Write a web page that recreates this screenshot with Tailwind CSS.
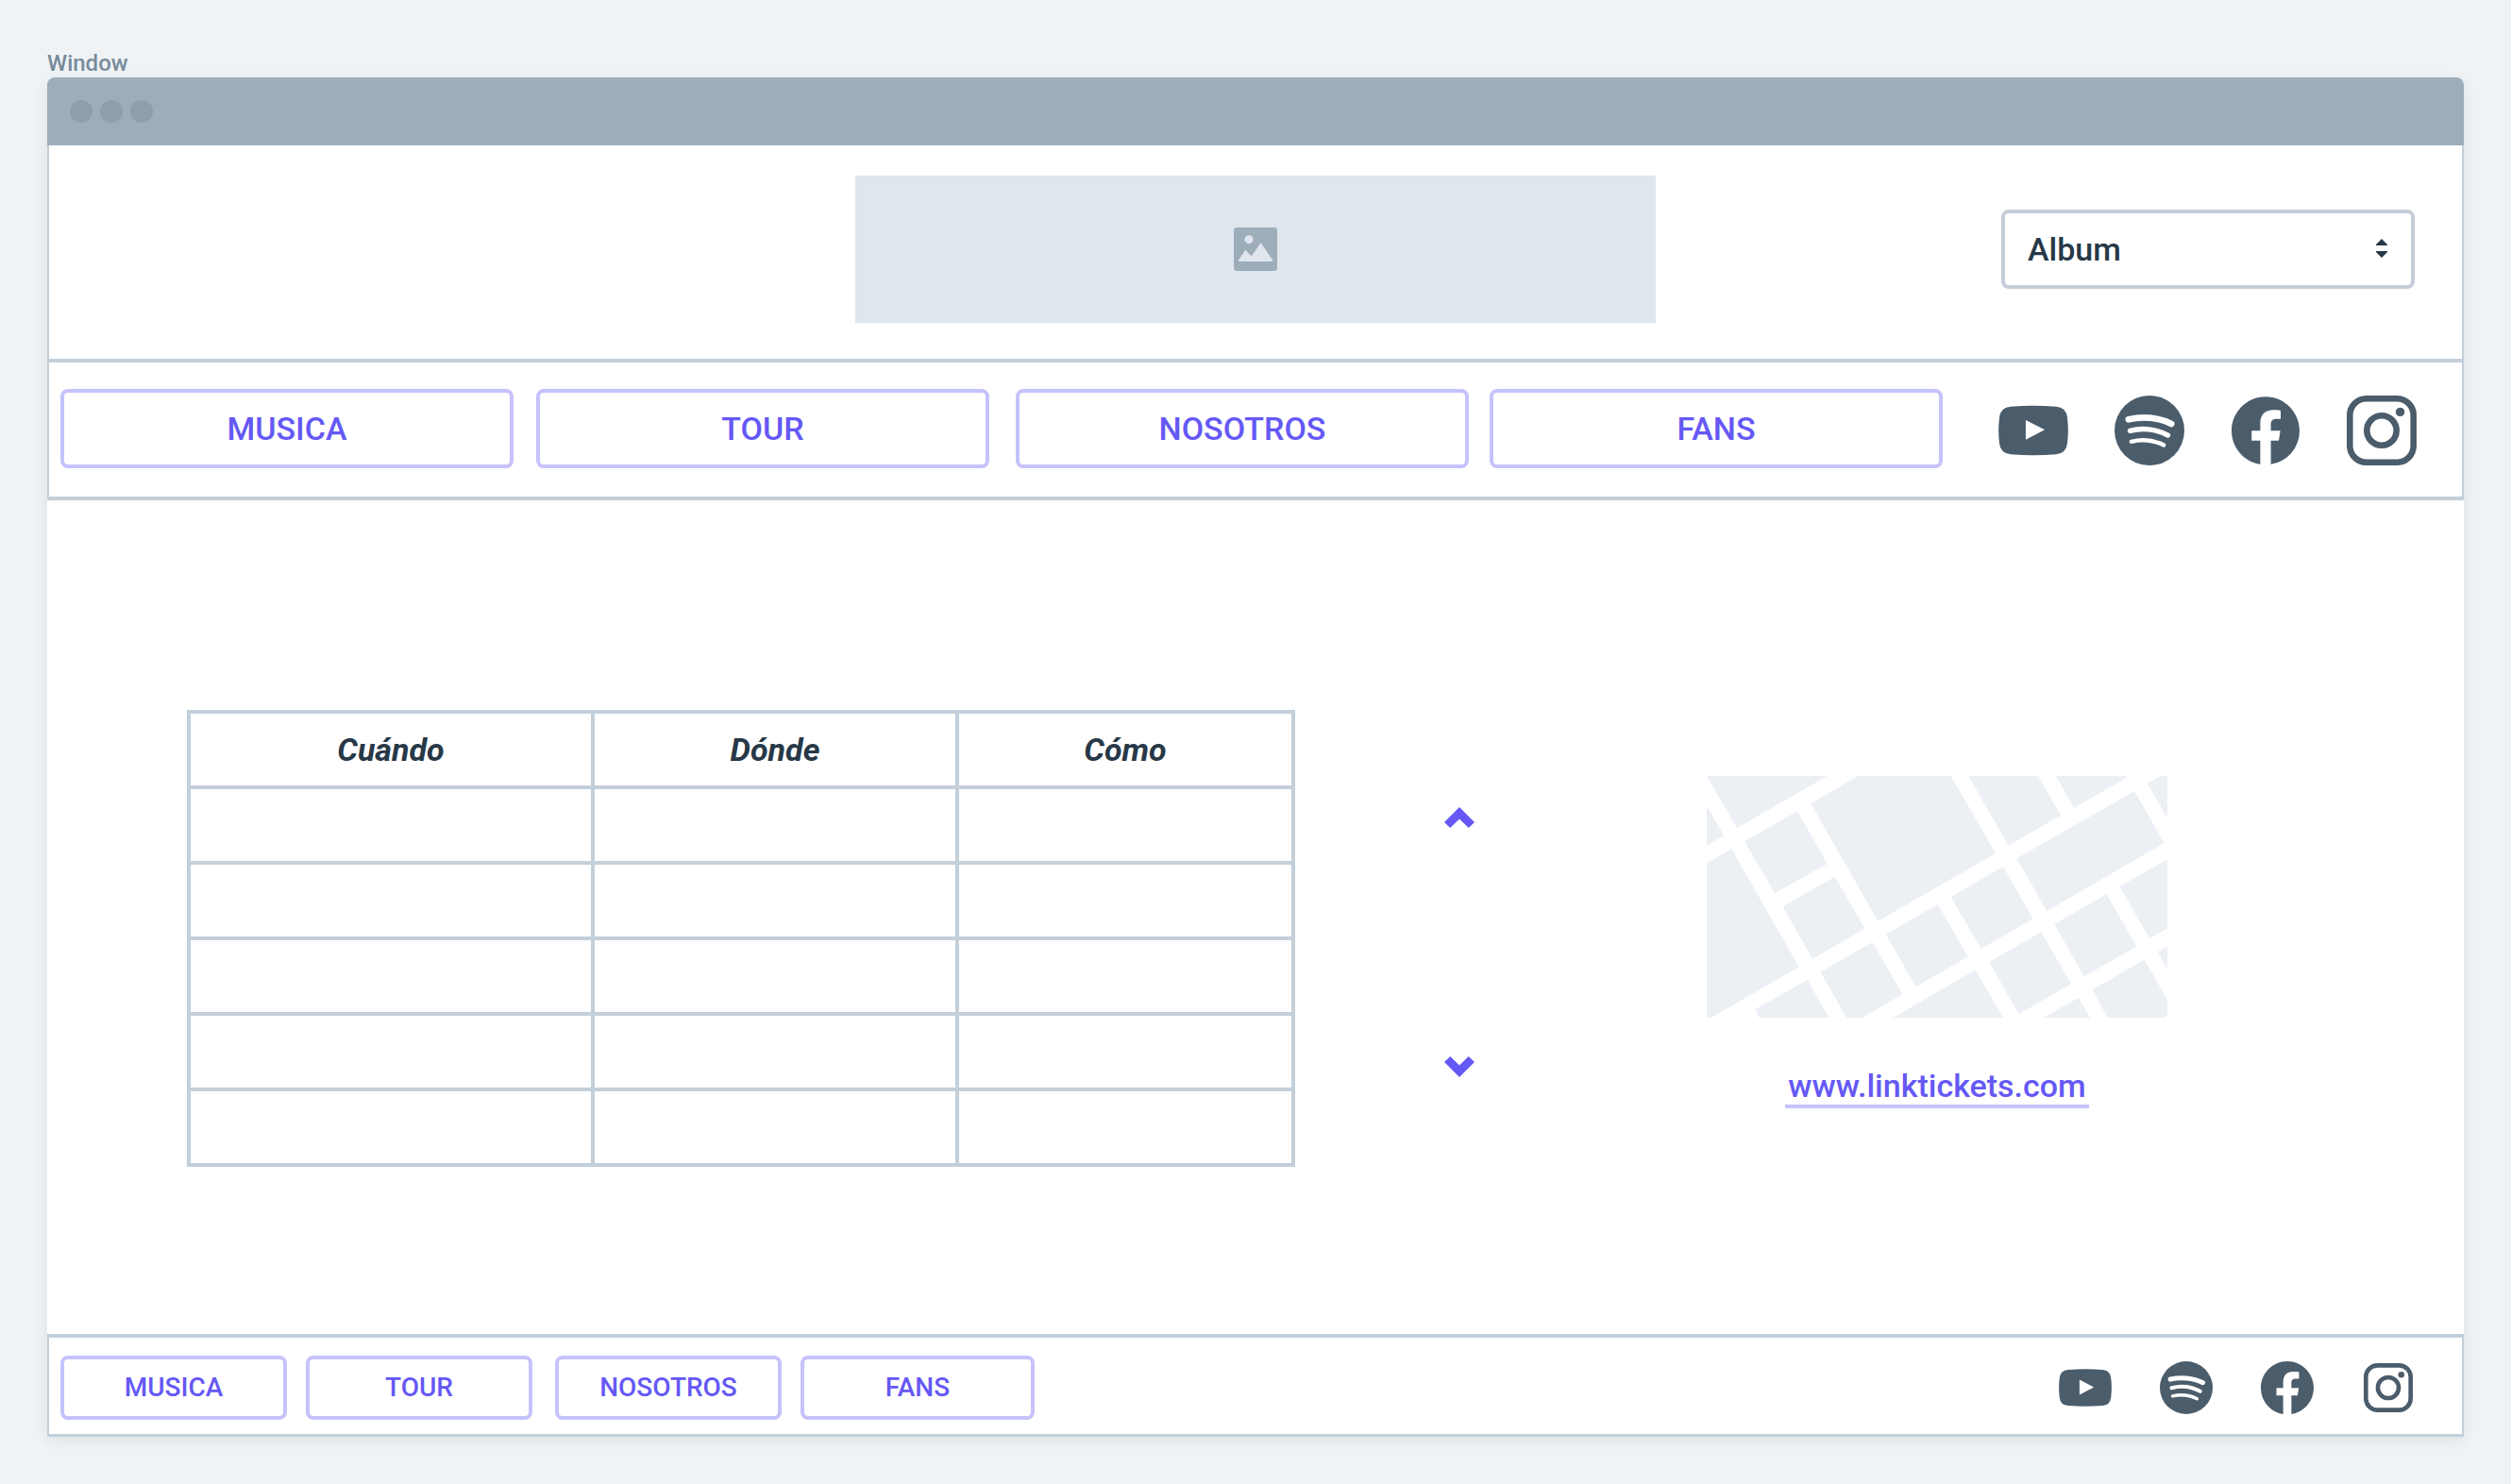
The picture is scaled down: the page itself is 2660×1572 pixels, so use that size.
<!DOCTYPE html>
<html lang="es">
<head>
<meta charset="utf-8">
<meta name="viewport" content="width=device-width, initial-scale=1">
<title>Tour</title>
<script src="https://cdn.jsdelivr.net/npm/@tailwindcss/browser@4"></script>
</head>
<body class="min-h-screen bg-[#eff3f6] px-[50px] pt-[52px] pb-[50px] font-[Roboto,sans-serif] font-medium text-[#273847]">

<!-- Icon shapes shared by the top and bottom bars -->
<svg class="hidden" aria-hidden="true">
  <symbol id="youtube" viewBox="26 28 220 220">
    <path fill="currentColor" fill-rule="evenodd" d="M65 63Q136 57 207 63Q240 65 243 98Q248 138 243 178Q240 210 207 213Q136 219 65 213Q32 210 29 178Q24 138 29 98Q32 65 65 63ZM112 105V167L172 136Z"/>
  </symbol>
  <symbol id="spotify" viewBox="394 28 220 220">
    <circle cx="504" cy="138" r="110" fill="currentColor"/>
    <g fill="none" stroke="#fff" stroke-linecap="round">
      <path stroke-width="20" d="M438 103C480 93 533 96 573 117"/>
      <path stroke-width="16" d="M443 139C480 129 525 133 562 153"/>
      <path stroke-width="13" d="M447 173C480 165 515 167 549 184"/>
    </g>
  </symbol>
  <symbol id="facebook" viewBox="2 2 20 20">
    <path fill="currentColor" d="M12 2.04C6.5 2.04 2 6.53 2 12.06C2 17.06 5.66 21.21 10.44 21.96V14.96H7.9V12.06H10.44V9.85C10.44 7.34 11.93 5.96 14.22 5.96C15.31 5.96 16.45 6.15 16.45 6.15V8.62H15.19C13.95 8.62 13.56 9.39 13.56 10.18V12.06H16.34L15.89 14.96H13.56V21.96A10 10 0 0 0 22 12.06C22 6.53 17.5 2.04 12 2.04Z"/>
  </symbol>
  <symbol id="instagram" viewBox="0 0 74 74">
    <rect x="3.3" y="3.3" width="67.4" height="67.4" rx="17.5" fill="none" stroke="currentColor" stroke-width="6.6"/>
    <circle cx="37" cy="37" r="15.7" fill="none" stroke="currentColor" stroke-width="6.6"/>
    <circle cx="56.6" cy="17.4" r="4.7" fill="currentColor"/>
  </symbol>
</svg>

<div class="text-2xl leading-[30px] text-[#788b9a]">Window</div>

<div class="rounded-t-lg bg-white shadow-[0_4px_16px_rgba(0,0,0,0.08)]">
  <div class="flex h-[72px] gap-2 rounded-t-lg bg-[#9eadba] px-6 pt-6">
    <span class="size-6 rounded-full bg-[#8e9eac]"></span>
    <span class="size-6 rounded-full bg-[#8e9eac]"></span>
    <span class="size-6 rounded-full bg-[#8e9eac]"></span>
  </div>

  <header class="grid grid-cols-[1fr_848px_1fr] items-center border-x-2 border-b-4 border-[#c3cfd9] pt-8 pb-[38px]">
    <div class="col-start-2 flex h-[156px] items-center justify-center bg-[#dfe6ee]">
      <svg class="size-[46px]" viewBox="21 18 138 138" role="img" aria-label="Imagen">
        <rect x="21" y="18" width="138" height="138" rx="9" fill="#9eadba"/>
        <circle cx="69" cy="56" r="13.5" fill="#dfe6ee"/>
        <path fill="#dfe6ee" d="M36 126V122L58 89L77 109L107 67L144 121V126Z"/>
      </svg>
    </div>
    <div class="relative ml-auto mr-[50px] w-[438px]">
      <select aria-label="Album" class="h-[84px] w-full appearance-none rounded-lg border-4 border-[#c5ced8] bg-white pl-6 text-[34px] leading-10">
        <option>Album</option>
      </select>
      <svg class="pointer-events-none absolute right-7 top-[30px] h-[22px] w-[14px]" viewBox="0 0 14 22" aria-hidden="true">
        <path fill="#273847" d="M7 1L13 7V8H1V7ZM7 21L13 15V14H1V15Z"/>
      </svg>
    </div>
  </header>

  <div class="flex items-center border-x-2 border-b-4 border-[#c3cfd9] pt-7 pr-12 pb-[30px] pl-3">
    <nav class="flex flex-1 text-[34px] leading-10 text-[#6558f5]">
      <button class="h-[84px] w-[480px] rounded-lg border-4 border-[#c6c2fb]">MUSICA</button>
      <button class="ml-6 h-[84px] w-[480px] rounded-lg border-4 border-[#c6c2fb]">TOUR</button>
      <button class="ml-7 h-[84px] w-[480px] rounded-lg border-4 border-[#c6c2fb]">NOSOTROS</button>
      <button class="ml-[22px] h-[84px] w-[480px] rounded-lg border-4 border-[#c6c2fb]">FANS</button>
    </nav>
    <div class="flex items-center gap-[49px] pt-1 text-[#4b5c6b]">
      <a href="#" aria-label="YouTube"><svg class="size-[74px]"><use href="#youtube"/></svg></a>
      <a href="#" aria-label="Spotify"><svg class="size-[74px]"><use href="#spotify"/></svg></a>
      <a href="#" aria-label="Facebook" class="flex size-[74px] items-center justify-center"><svg class="size-[72px]"><use href="#facebook"/></svg></a>
      <a href="#" aria-label="Instagram"><svg class="size-[74px]"><use href="#instagram"/></svg></a>
    </div>
  </div>

  <main class="grid grid-cols-[1174fr_348fr_664fr] pt-[222px] pr-[226px] pb-[169px] pl-[148px]">
    <div class="pb-2">
      <table class="w-full table-fixed border-collapse">
        <thead>
          <tr class="h-20 text-[34px] leading-10 italic">
            <th class="w-[428px] border-4 border-[#c3cfd9] p-0 font-bold">Cuándo</th>
            <th class="w-[386px] border-4 border-[#c3cfd9] p-0 font-bold">Dónde</th>
            <th class="border-4 border-[#c3cfd9] p-0 font-bold">Cómo</th>
          </tr>
        </thead>
        <tbody>
          <tr class="h-20"><td class="border-4 border-[#c3cfd9]"></td><td class="border-4 border-[#c3cfd9]"></td><td class="border-4 border-[#c3cfd9]"></td></tr>
          <tr class="h-20"><td class="border-4 border-[#c3cfd9]"></td><td class="border-4 border-[#c3cfd9]"></td><td class="border-4 border-[#c3cfd9]"></td></tr>
          <tr class="h-20"><td class="border-4 border-[#c3cfd9]"></td><td class="border-4 border-[#c3cfd9]"></td><td class="border-4 border-[#c3cfd9]"></td></tr>
          <tr class="h-20"><td class="border-4 border-[#c3cfd9]"></td><td class="border-4 border-[#c3cfd9]"></td><td class="border-4 border-[#c3cfd9]"></td></tr>
          <tr class="h-20"><td class="border-4 border-[#c3cfd9]"></td><td class="border-4 border-[#c3cfd9]"></td><td class="border-4 border-[#c3cfd9]"></td></tr>
        </tbody>
      </table>
    </div>

    <div class="flex flex-col items-center justify-center gap-[242px] text-[#6558f5]">
      <button aria-label="Subir"><svg class="h-[22px] w-8" viewBox="0 0 32 22"><path fill="currentColor" d="M16 0L32 16L25.8 22L16 12.6L6.2 22L0 16Z"/></svg></button>
      <button aria-label="Bajar"><svg class="h-[22px] w-8" viewBox="0 0 32 22"><path fill="currentColor" d="M16 22L32 6L25.8 0L16 9.4L6.2 0L0 6Z"/></svg></button>
    </div>

    <div class="flex flex-col items-center justify-center">
      <svg class="h-64 w-[488px]" viewBox="81 66 1417 768" preserveAspectRatio="none" role="img" aria-label="Mapa">
        <path fill="#ecf0f5" d="M81 66H452L174 232ZM81 161L134 256L81 288ZM197 273L360 178L452 345L290 439ZM81 343L158 298L365 673L95 834H81ZM315 481L475 386L567 551L406 647ZM546 66H832L970 312L608 527L401 154ZM886 66H1101L1170 191L1009 287ZM1155 66H1372V72L1211 167ZM1436 90L1476 66H1498V200ZM1034 328L1397 114L1488 279L1127 495ZM632 569L792 474L885 640L724 736ZM832 450L993 354L1085 520L925 615ZM1150 537L1311 442L1403 608L1242 703ZM1351 417L1498 331V551L1443 582ZM1467 625L1498 607V680ZM949 657L1110 562L1202 727L1041 823ZM431 689L591 594L683 760L560 834H511ZM229 808L391 714L457 834H243ZM654 834L908 682L993 834ZM1117 834L1225 770L1260 834ZM1267 745L1427 650L1498 776V826L1490 834H1314Z"/>
      </svg>
      <a href="#" class="mt-[52px] border-b-4 border-[#c6c2fb] px-[3px] text-[34px] leading-10 text-[#6558f5]">www.linktickets.com</a>
    </div>
  </main>

  <footer class="flex items-center border-x-2 border-t-4 border-b-[3px] border-[#c3cfd9] pt-[19px] pr-[50px] pb-[15px] pl-3">
    <nav class="flex flex-1 text-[28px] leading-8 text-[#6558f5]">
      <button class="h-[68px] w-60 rounded-lg border-4 border-[#c6c2fb]">MUSICA</button>
      <button class="ml-5 h-[68px] w-60 rounded-lg border-4 border-[#c6c2fb]">TOUR</button>
      <button class="ml-6 h-[68px] w-60 rounded-lg border-4 border-[#c6c2fb]">NOSOTROS</button>
      <button class="ml-5 h-[68px] w-[248px] rounded-lg border-4 border-[#c6c2fb]">FANS</button>
    </nav>
    <div class="flex items-center gap-[51px] text-[#4b5c6b]">
      <a href="#" aria-label="YouTube"><svg class="size-14"><use href="#youtube"/></svg></a>
      <a href="#" aria-label="Spotify"><svg class="size-14"><use href="#spotify"/></svg></a>
      <a href="#" aria-label="Facebook"><svg class="size-14"><use href="#facebook"/></svg></a>
      <a href="#" aria-label="Instagram" class="flex size-14 items-center justify-center"><svg class="size-[52px]"><use href="#instagram"/></svg></a>
    </div>
  </footer>
</div>
</body>
</html>
